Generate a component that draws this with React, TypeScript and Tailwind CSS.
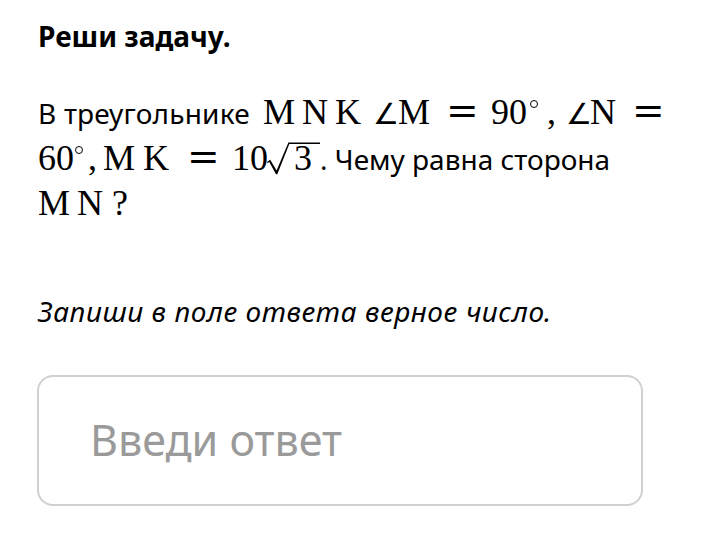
import React from "react";

// math tokens: KaTeX-like serif on the same 46px line box as the body text
const M = "inline-block font-['Liberation_Serif','DejaVu_Serif',serif] text-[36px] leading-[46px]";
const EQ = "inline-block font-['DejaVu_Serif',serif] text-[39px] leading-[46px]";
const ANG = "inline-block font-['DejaVu_Sans',sans-serif] text-[29px] leading-[46px]";

function Deg({ w }: { w: string }) {
  return (
    <span className={`${w} self-start pt-[12px]`}>
      <span className="block w-[8px] h-[8px] rounded-full border-[1.3px] border-black" />
    </span>
  );
}

function Sqrt3() {
  return (
    <span className={`${M} relative w-[53px] pl-[27px]`}>
      <svg className="absolute left-0 top-[7px]" width="53" height="33" viewBox="0 0 53 33">
        <path d="M0 20 L3.2 17.8 L9.6 28.6 L21.4 0.6 L53 0.6 L53 2 L22.3 2 L10.3 32.2 L9 32.2 L2.3 20.1 L0.7 20.9 Z" fill="#000" />
      </svg>
      3
    </span>
  );
}

export default function App() {
  return (
    <div className="w-[720px] h-[536px] bg-white text-black font-['Noto_Sans','Open_Sans',sans-serif] px-[38px] pt-[16px]">
      <h1 className="text-[28px] font-bold leading-[40px]">Реши задачу.</h1>

      <div className="mt-[32px] text-[28px] leading-[46px]">
        <div className="flex items-baseline h-[46px] whitespace-nowrap">
          <span className="w-[225px] tracking-[0.2px]">В треугольнике</span>
          <span className={`${M} w-[110px] tracking-[7px]`}>MNK</span>
          <span className={`${ANG} w-[25px]`}>∠</span>
          <span className={`${M} w-[48px]`}>M</span>
          <span className={`${EQ} w-[45px]`}>=</span>
          <span className={`${M} w-[39px]`}>90</span>
          <Deg w="w-[17px]" />
          <span className={`${M} w-[19px]`}>,</span>
          <span className={`${ANG} w-[24px]`}>∠</span>
          <span className={`${M} w-[42px]`}>N</span>
          <span className={EQ}>=</span>
        </div>
        <div className="flex items-baseline h-[46px] whitespace-nowrap">
          <span className={`${M} w-[37px]`}>60</span>
          <Deg w="w-[13px]" />
          <span className={`${M} w-[15px]`}>,</span>
          <span className={`${M} w-[84px] tracking-[8px]`}>MK</span>
          <span className={`${EQ} w-[45px]`}>=</span>
          <span className={`${M} w-[35px]`}>10</span>
          <Sqrt3 />
          <span>. Чему равна сторона</span>
        </div>
        <div className="flex items-baseline h-[46px] whitespace-nowrap">
          <span className={`${M} w-[74px] tracking-[7px]`}>MN</span>
          <span className={M}>?</span>
        </div>
      </div>

      <p className="mt-[65px] text-[28px] italic leading-[40px] tracking-[0.55px]">Запиши в поле ответа верное число.</p>

      <div className="mt-[44px] w-[606px] h-[131px] border-2 border-[#d0d0d0] rounded-[16px] flex items-center pl-[51px] -ml-[1px]">
        <input
          className="w-full outline-none bg-transparent text-[43px] placeholder:text-[#9a9a9a] font-['Noto_Sans','Open_Sans',sans-serif]"
          placeholder="Введи ответ"
        />
      </div>
    </div>
  );
}
